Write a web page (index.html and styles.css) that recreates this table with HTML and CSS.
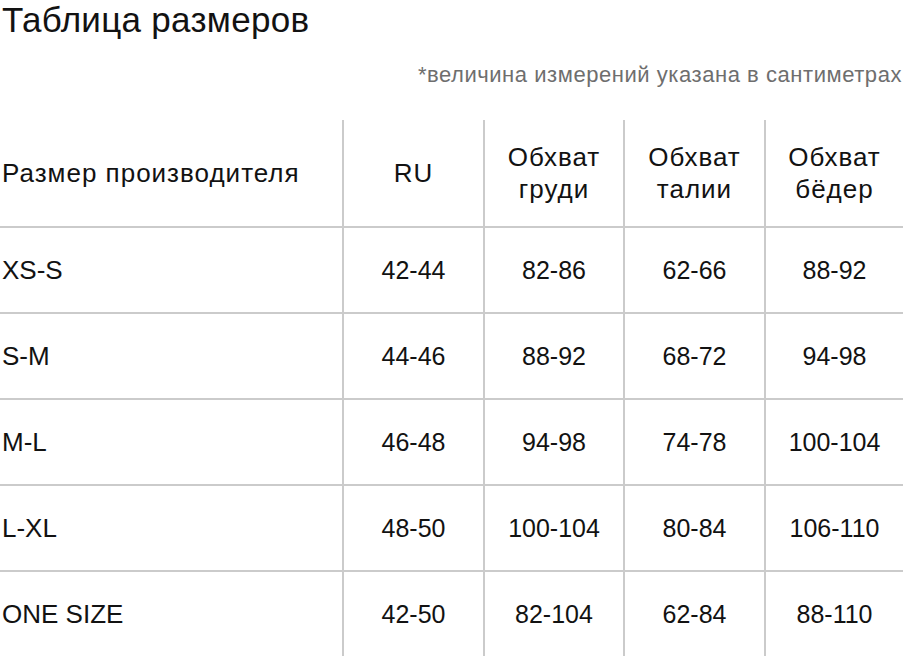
FILE: index.html
```html
<!DOCTYPE html>
<html lang="ru">
<head>
<meta charset="utf-8">
<title>Таблица размеров</title>
<link rel="stylesheet" href="styles.css">
</head>
<body>
<div class="page">
  <h1 class="title">Таблица размеров</h1>
  <p class="note">*величина измерений указана в сантиметрах</p>
  <div class="grid">
    <div class="cell first head">Размер производителя</div>
    <div class="cell head">RU</div>
    <div class="cell head">Обхват<br>груди</div>
    <div class="cell head">Обхват<br>талии</div>
    <div class="cell head">Обхват<br>бёдер</div>

    <div class="cell first row">XS-S</div>
    <div class="cell row">42-44</div>
    <div class="cell row">82-86</div>
    <div class="cell row">62-66</div>
    <div class="cell row">88-92</div>

    <div class="cell first row">S-M</div>
    <div class="cell row">44-46</div>
    <div class="cell row">88-92</div>
    <div class="cell row">68-72</div>
    <div class="cell row">94-98</div>

    <div class="cell first row">M-L</div>
    <div class="cell row">46-48</div>
    <div class="cell row">94-98</div>
    <div class="cell row">74-78</div>
    <div class="cell row">100-104</div>

    <div class="cell first row">L-XL</div>
    <div class="cell row">48-50</div>
    <div class="cell row">100-104</div>
    <div class="cell row">80-84</div>
    <div class="cell row">106-110</div>

    <div class="cell first row">ONE SIZE</div>
    <div class="cell row">42-50</div>
    <div class="cell row">82-104</div>
    <div class="cell row">62-84</div>
    <div class="cell row">88-110</div>
  </div>
</div>
</body>
</html>
```
FILE: styles.css
```css
html, body {
  margin: 0;
  padding: 0;
  background: #ffffff;
}
body {
  font-family: "Liberation Sans", Arial, Helvetica, sans-serif;
  color: #121212;
  overflow: hidden;
}
.page {
  width: 906px;
  height: 658px;
  overflow: hidden;
}
.title {
  margin: 0;
  padding: 0 0 0 2px;
  font-size: 35px;
  letter-spacing: 0.3px;
  font-weight: normal;
  line-height: 40px;
}
.note {
  margin: 22px 0 0 0;
  padding-right: 4px;
  text-align: right;
  font-size: 22px;
  letter-spacing: 0.55px;
  line-height: 26px;
  color: #6e6e6e;
}
.grid {
  margin-top: 32px;
  width: 903px;
  display: grid;
  grid-template-columns: 342px 141px 140px 141px 139px;
  grid-template-rows: 106px repeat(5, 86px);
}
.cell {
  display: flex;
  align-items: center;
  justify-content: center;
  text-align: center;
  font-size: 25px;
  border-left: 2px solid #cbcbcb;
}
.cell.first {
  border-left: none;
  justify-content: flex-start;
  text-align: left;
  padding-left: 2px;
  font-size: 26px;
  letter-spacing: 0;
}
.cell.head {
  font-size: 26px;
  letter-spacing: 1px;
  line-height: 32px;
}
.row {
  border-top: 2px solid #cbcbcb;
}
```
